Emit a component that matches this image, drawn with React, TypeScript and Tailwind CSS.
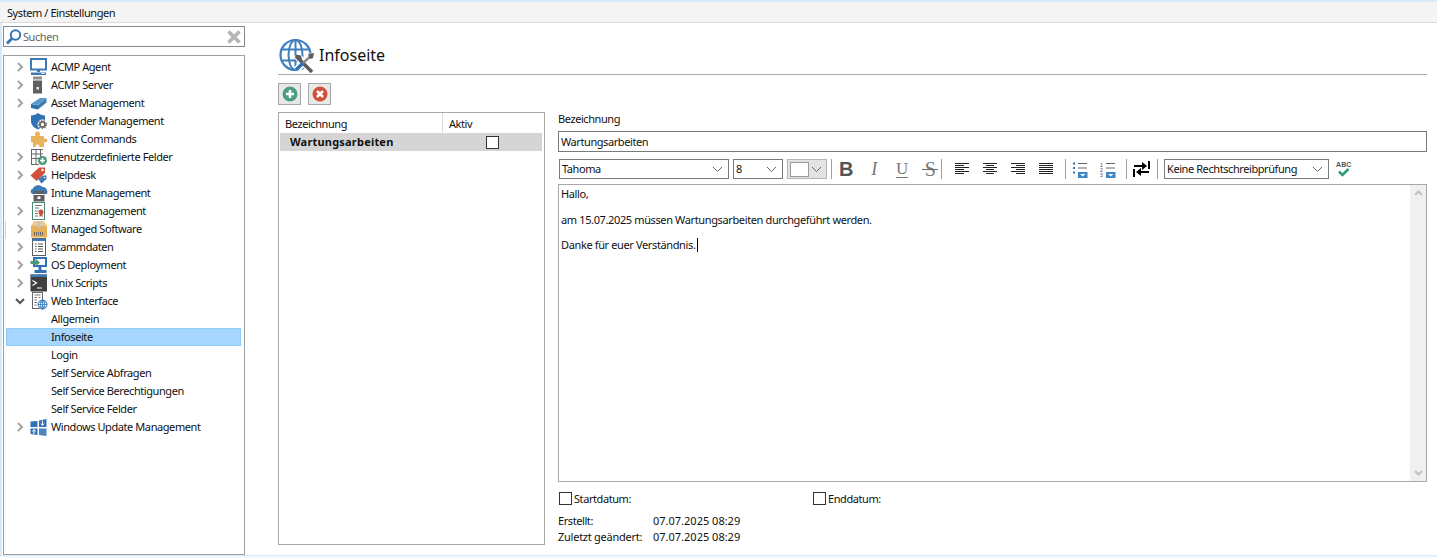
import React from "react";

const Chevron = ({ open }: { open?: boolean }) => (
  <svg width="10" height="10" viewBox="0 0 10 10" fill="none" stroke={open ? "#555" : "#a4a4a4"} strokeWidth="2">
    {open ? <path d="M1 3l4 4 4-4" /> : <path d="M3 1l4 4-4 4" />}
  </svg>
);

const Small = ({ children }: { children: React.ReactNode }) => (
  <svg width="18" height="18" viewBox="0 0 18 18" fill="none">{children}</svg>
);

const Monitor = () => (
  <Small>
    <rect x="1" y="1" width="15" height="10.500" fill="#fff" stroke="#3d7ab5" strokeWidth="2" />
    <rect x="7" y="12" width="3" height="2" fill="#3d7ab5" />
    <rect x="1" y="14.500" width="15" height="2.500" fill="#3d7ab5" />
    <rect x="11.500" y="15" width="3" height="1" fill="#fff" />
  </Small>
);
const Server = () => (
  <Small>
    <rect x="3" y="0.500" width="9" height="3" fill="#8f8f8f" />
    <rect x="3" y="4.500" width="9" height="13" fill="#5f5f5f" />
    <rect x="6.500" y="11" width="2.500" height="2.500" fill="#e8e8e8" />
  </Small>
);
const Asset = () => (
  <Small>
    <path d="M1 10l9-6h6.500L8 11z" fill="#5b96cc" />
    <path d="M1 10l7 1.200v4.300L1 14z" fill="#2f6ea8" />
    <path d="M8 11l8.500-7v4.500L8 15.500z" fill="#3d7ab5" />
  </Small>
);
const Shield = () => (
  <Small>
    <path d="M1 3.500C4 3.500 6 2.500 8 1c2 1.500 4 2.500 7 2.500V9c0 4-3 7-7 8.500C4 16 1 13 1 9z" fill="#2f72b5" />
    <circle cx="12.500" cy="12.500" r="5" fill="#fff" />
    <circle cx="12.500" cy="12.500" r="2.600" fill="none" stroke="#666" strokeWidth="1.800" />
    <circle cx="12.500" cy="12.500" r="4" fill="none" stroke="#666" strokeWidth="1.200" strokeDasharray="1.300 1.500" />
  </Small>
);
const Puzzle = () => (
  <Small>
    <path d="M1 6h4.500C4.500 4 5 1.500 7.500 1.500S10.500 4 9.500 6H14v3c1.500-1 3.500 0 3.500 1.500S15.500 13 14 12v5H9c1-1.500 0-2.500-1.500-2.500S5 15.500 6 17H3v-5c-1 1-2 .5-2-1z" fill="#e8b45a" />
  </Small>
);
const Fields = () => (
  <Small>
    <path d="M1.500 1v16M6 1v16M10.500 1v9M1 1.500h12M1 6h12M1 10.500h9M1 16.500h8" stroke="#666" strokeWidth="1" />
    <circle cx="12.500" cy="12.500" r="4.500" fill="#4a9a7a" />
    <path d="M12.500 10v5M10 12.500h5" stroke="#fff" strokeWidth="1.500" />
  </Small>
);
const Tag = () => (
  <Small>
    <path d="M0.500 9.500L9 1.500h6v5.500l-8.500 8z" fill="#d0503a" />
    <circle cx="12.500" cy="4" r="1.200" fill="#fff" />
    <path d="M8 13l5-3.500h3.500V13l-5 4.500z" fill="#3d7ab5" />
    <circle cx="14.500" cy="11.500" r="0.800" fill="#fff" />
  </Small>
);
const Intune = () => (
  <Small>
    <path d="M3 10C0 10 0 5 3 4.500C4 1 10 0 12.500 3C15.500 2.500 18.500 6 17 10z" fill="#3d7ab5" />
    <rect x="3.500" y="7" width="11" height="10.500" fill="#5f5f5f" />
    <rect x="3.500" y="10" width="11" height="1" fill="#fff" />
    <rect x="7.500" y="12.500" width="3" height="2.500" fill="#fff" />
  </Small>
);
const License = () => (
  <Small>
    <rect x="2.500" y="0.500" width="12" height="17" fill="#fff" stroke="#4a8a70" />
    <path d="M5 3.500h7M5 6h4M5 9h3M5 11.500h3M5 14h3" stroke="#777" />
    <circle cx="11" cy="10" r="2.500" fill="#c9503c" />
    <path d="M9.500 11.500v3.500l1.500-1 1.500 1v-3.500" fill="#c9503c" />
  </Small>
);
const Box = () => (
  <Small>
    <path d="M1 6l3-5h10l3 5z" fill="#ecc98c" />
    <rect x="1" y="6" width="16" height="11.500" fill="#e6ae55" />
    <rect x="7.500" y="1" width="3" height="7" fill="#c4c4c4" />
    <path d="M4.500 12v3.500M6.500 12v3.500M8.500 12v3.500M10.500 12v3.500M12.500 12v3.500" stroke="#666" strokeWidth="1" />
  </Small>
);
const ListDoc = () => (
  <Small>
    <rect x="2.500" y="0.500" width="13" height="17" fill="#fff" stroke="#5f5f5f" />
    <rect x="2.500" y="0.500" width="13" height="2.500" fill="#3d7ab5" />
    <path d="M5 6h1.500M8 6h5M5 8.500h1.500M8 8.500h5M5 11h1.500M8 11h5M5 13.500h1.500M8 13.500h5" stroke="#555" />
  </Small>
);
const Deploy = () => (
  <Small>
    <rect x="3" y="1" width="14" height="10" fill="#2f72b5" />
    <rect x="5" y="3" width="10" height="6" fill="#fff" />
    <rect x="8.500" y="11" width="3" height="3" fill="#2f72b5" />
    <rect x="4.500" y="14" width="12" height="3" fill="#2f72b5" />
    <path d="M0.500 5h5V2.500L10 6.500l-4.500 4V8h-5z" fill="#4a9a7a" />
  </Small>
);
const Terminal = () => (
  <Small>
    <rect x="0.500" y="0.500" width="16.500" height="17" fill="#3f3f3f" />
    <rect x="0.500" y="0.500" width="16.500" height="2.500" fill="#3d7ab5" />
    <path d="M2.500 6.500l4 2.500-4 2.500" stroke="#fff" strokeWidth="1.200" fill="none" />
    <path d="M7 14h5" stroke="#fff" />
  </Small>
);
const WebDoc = () => (
  <Small>
    <rect x="2.500" y="0.500" width="10" height="16" fill="#fff" stroke="#666" />
    <path d="M4.500 3h6M4.500 5.500h2.500M8.500 5.500h2M4.500 8h2.500M4.500 10.500h2.500M4.500 13h2" stroke="#777" />
    <circle cx="12.500" cy="12.500" r="5" fill="#fff" />
    <circle cx="12.500" cy="12.500" r="4.500" fill="none" stroke="#2f72b5" />
    <path d="M8 12.500h9M12.500 8v9M9 10h7M9 15h7" stroke="#2f72b5" strokeWidth="0.800" />
    <ellipse cx="12.500" cy="12.500" rx="2" ry="4.500" fill="none" stroke="#2f72b5" strokeWidth="0.800" />
  </Small>
);
const WinUpdate = () => (
  <Small>
    <path d="M0.500 3.500L7.500 3v6h-7z" fill="#2f72b5" />
    <path d="M9 2.500l7.500-1.500v8H9z" fill="#2f72b5" />
    <path d="M0.500 10.500h7v6.500l-7-1z" fill="#2f72b5" />
    <path d="M9 10.500h7.500V18L9 17z" fill="#4a86c0" />
    <path d="M12.500 2.500v5M11 5.500l1.500 2 1.500-2" stroke="#fff" strokeWidth="1" fill="none" />
    <path d="M4 11.500v4.500M2.500 13.500l1.500-2 1.500 2" stroke="#fff" strokeWidth="1" fill="none" />
  </Small>
);

type Row = { label: string; icon?: React.ReactNode; chevron?: "open" | "closed"; selected?: boolean; mark?: boolean };
const rows: Row[] = [
  { label: "ACMP Agent", icon: <Monitor />, chevron: "closed" },
  { label: "ACMP Server", icon: <Server />, chevron: "closed" },
  { label: "Asset Management", icon: <Asset />, chevron: "closed" },
  { label: "Defender Management", icon: <Shield /> },
  { label: "Client Commands", icon: <Puzzle /> },
  { label: "Benutzerdefinierte Felder", icon: <Fields />, chevron: "closed" },
  { label: "Helpdesk", icon: <Tag />, chevron: "closed" },
  { label: "Intune Management", icon: <Intune /> },
  { label: "Lizenzmanagement", icon: <License />, chevron: "closed" },
  { label: "Managed Software", icon: <Box />, chevron: "closed", mark: true },
  { label: "Stammdaten", icon: <ListDoc />, chevron: "closed" },
  { label: "OS Deployment", icon: <Deploy />, chevron: "closed" },
  { label: "Unix Scripts", icon: <Terminal />, chevron: "closed" },
  { label: "Web Interface", icon: <WebDoc />, chevron: "open" },
  { label: "Allgemein" },
  { label: "Infoseite", selected: true },
  { label: "Login" },
  { label: "Self Service Abfragen" },
  { label: "Self Service Berechtigungen" },
  { label: "Self Service Felder" },
  { label: "Windows Update Management", icon: <WinUpdate />, chevron: "closed" },
];

const TreeRow = ({ row }: { row: Row }) => (
  <div className={`relative flex h-[18px] items-center border ${row.selected ? "border-[#8fcbfb] bg-[#a6d5fe]" : "border-transparent"}`}>
    {row.mark && <span className="absolute -left-[2px] top-0 h-[18px] w-px bg-[#bcd9f2]" />}
    <span className="flex w-[23px] justify-end pr-[5px]">{row.chevron && <Chevron open={row.chevron === "open"} />}</span>
    <span className="flex w-[21px] items-center">{row.icon}</span>
    <span className="whitespace-nowrap">{row.label}</span>
  </div>
);

const Caret = () => (
  <svg width="11" height="7" viewBox="0 0 11 7" fill="none" stroke="#666" strokeWidth="1">
    <path d="M1 1l4.500 4.500L10 1" />
  </svg>
);

const Select = ({ label, className }: { label: string; className: string }) => (
  <div className={`flex h-[20px] items-center justify-between border border-[#7a7a7a] bg-white pl-[2px] pr-[5px] ${className}`}>
    <span className="whitespace-nowrap">{label}</span>
    <Caret />
  </div>
);

const Sep = ({ className }: { className: string }) => <span className={`h-[20px] w-px bg-[#a0a0a0] ${className}`} />;

const Slot = ({ children, className = "" }: { children: React.ReactNode; className?: string }) => (
  <span className={`relative flex h-[20px] w-[28px] items-center justify-center ${className}`}>{children}</span>
);

const Align = ({ d }: { d: string }) => (
  <svg width="14" height="12" viewBox="0 0 14 12" stroke="#222" strokeWidth="1" fill="none"><path d={d} /></svg>
);

const ListIcon = ({ numbered }: { numbered?: boolean }) => (
  <svg width="16" height="17" viewBox="0 0 16 17" fill="none">
    {numbered ? (
      <text x="0" y="6" fontSize="5" fill="#444" fontFamily="Liberation Sans, sans-serif">1</text>
    ) : (
      <rect x="1" y="1.500" width="2" height="2" fill="#2f72b5" />
    )}
    {numbered ? (
      <text x="0" y="11" fontSize="5" fill="#444" fontFamily="Liberation Sans, sans-serif">2</text>
    ) : (
      <rect x="1" y="6" width="2" height="2" fill="#2f72b5" />
    )}
    {numbered ? (
      <text x="0" y="16" fontSize="5" fill="#444" fontFamily="Liberation Sans, sans-serif">3</text>
    ) : (
      <rect x="1" y="10.500" width="2" height="2" fill="#2f72b5" />
    )}
    <path d="M6 2.500h9M6 7h9" stroke="#666" />
    <rect x="6" y="11" width="9.500" height="6" fill="#3d86c6" />
    <path d="M8 13h5.500l-2.750 2.500z" fill="#fff" />
  </svg>
);

const Check = ({ className = "" }: { className?: string }) => (
  <span className={`block h-[13px] w-[13px] shrink-0 border border-[#333] bg-white ${className}`} />
);

export default function App() {
  return (
    <div
      className="flex h-[558px] w-[1437px] flex-col overflow-hidden bg-white text-[11px] leading-[14px] tracking-[-0.42px] text-[#111]"
      style={{ fontFamily: '"Noto Sans", sans-serif' }}
    >
      <div className="h-[2px] shrink-0 bg-[#d6eafa]" />
      <div className="flex h-[21px] shrink-0 items-center border-b border-[#dcdcdc] bg-[#f4f4f4] pl-[7px] pt-[1px]">System / Einstellungen</div>
      <div className="flex min-h-0 flex-1">
        <div className="w-[2px] bg-[#d6eafa]" />
        <div className="flex w-[243px] shrink-0 flex-col pl-px pt-[3px]">
          <div className="flex h-[21px] shrink-0 items-center border border-[#7f8a94] bg-white pl-px pr-[3px]">
            <svg width="18" height="18" viewBox="0 0 18 18" fill="none" className="shrink-0">
              <circle cx="10.500" cy="7" r="4.700" stroke="#3477b7" strokeWidth="2" />
              <path d="M7 10.500L2 15.500" stroke="#3477b7" strokeWidth="3" />
            </svg>
            <span className="flex-1 text-[#666]">Suchen</span>
            <svg width="14" height="14" viewBox="0 0 14 14" stroke="#b5b5b5" strokeWidth="3.500">
              <path d="M1.500 1.500l11 11M12.500 1.500l-11 11" />
            </svg>
          </div>
          <div className="mt-[8px] flex-1 border border-[#a0a0a0] bg-white pl-[2px] pr-[3px] pt-[2px]">
            {rows.map((r) => (
              <TreeRow key={r.label} row={r} />
            ))}
          </div>
        </div>
        <div className="flex min-w-0 flex-1 flex-col pl-[33px] pr-[10px] pt-[15px]">
          <div className="flex h-[37px] shrink-0 items-start border-b border-[#a8a8a8]">
            <svg width="38" height="36" viewBox="0 0 38 36" fill="none" className="ml-[1px] shrink-0">
              <circle cx="16.500" cy="17" r="15" stroke="#3f7fbd" strokeWidth="2.200" />
              <ellipse cx="16.500" cy="17" rx="7" ry="15" stroke="#3f7fbd" strokeWidth="2" />
              <path d="M2 11.500h29M2 22.500h29M16.500 2v30" stroke="#3f7fbd" strokeWidth="2" />
              <path d="M17 17l16 16M17 32l17-15" stroke="#fff" strokeWidth="7" />
              <path d="M19 20l14 14" stroke="#5c5c5c" strokeWidth="3.500" />
              <path d="M17 16.500l5 1 1 4-4 1-3-3z" fill="#5c5c5c" />
              <path d="M24 25l9-8" stroke="#8a8a8a" strokeWidth="2.500" />
              <path d="M17 32l7-7" stroke="#2f72b5" strokeWidth="3.500" />
              <path d="M29 16l6-1-1 5-3 1z" fill="#5c5c5c" />
            </svg>
            <span className="ml-[2px] pt-[7px] text-[16px] leading-[20px] tracking-normal">Infoseite</span>
          </div>
          <div className="mt-[8px] flex h-[22px] shrink-0 gap-[7px]">
            <div className="flex h-[22px] w-[23px] items-center justify-center border border-[#a8a8a8] bg-[#e8e8e8]">
              <svg width="16" height="16" viewBox="0 0 16 16">
                <circle cx="8" cy="8" r="7.500" fill="#4a9e7e" />
                <path d="M8 4v8M4 8h8" stroke="#fff" strokeWidth="2.500" />
              </svg>
            </div>
            <div className="flex h-[22px] w-[23px] items-center justify-center border border-[#a8a8a8] bg-[#e8e8e8]">
              <svg width="16" height="16" viewBox="0 0 16 16">
                <circle cx="8" cy="8" r="7.500" fill="#d0503a" />
                <path d="M5 5l6 6M11 5l-6 6" stroke="#fff" strokeWidth="2.500" />
              </svg>
            </div>
          </div>
          <div className="mt-[7px] flex min-h-0 flex-1 pb-[10px]">
            <div className="w-[267px] shrink-0 border border-[#a8a8a8] pl-px pr-[2px]">
              <div className="flex h-[20px] items-center">
                <span className="h-[20px] w-[163px] border-r border-[#dcdcdc] pl-[5px] pt-[4px]">Bezeichnung</span>
                <span className="pl-[6px] pt-[1px]">Aktiv</span>
              </div>
              <div className="flex h-[18px] items-center bg-[#d5d5d5]">
                <span className="w-[206px] pl-[10px] font-bold tracking-[0.2px]">Wartungsarbeiten</span>
                <Check />
              </div>
            </div>
            <div className="ml-[13px] flex min-w-0 flex-1 flex-col">
              <div className="h-[19px] shrink-0">Bezeichnung</div>
              <div className="flex h-[21px] shrink-0 items-center border border-[#7a7a7a] bg-white pl-[2px]">Wartungsarbeiten</div>
              <div className="mt-[7px] flex h-[20px] shrink-0 items-center">
                <Select label="Tahoma" className="ml-px w-[170px]" />
                <Select label="8" className="ml-[4px] w-[50px]" />
                <div className="ml-[4px] flex h-[20px] w-[40px] items-center justify-between border border-[#b5b5b5] bg-[#e3e3e3] pl-[2px] pr-[4px]">
                  <span className="h-[15px] w-[19px] border border-[#9a9a9a] bg-white" />
                  <Caret />
                </div>
                <Sep className="ml-[4px]" />
                <Slot>
                  <span className="text-[20px] font-bold leading-none text-[#555]" style={{ fontFamily: '"Liberation Sans", sans-serif' }}>B</span>
                </Slot>
                <Slot>
                  <span className="text-[18px] italic leading-none text-[#777]" style={{ fontFamily: '"Liberation Serif", serif' }}>I</span>
                </Slot>
                <Slot>
                  <span className="border-b border-[#777] text-[17px] leading-[17px] text-[#777]" style={{ fontFamily: '"Liberation Serif", serif' }}>U</span>
                </Slot>
                <Slot className="-mr-[3px]">
                  <span className="text-[20px] leading-none text-[#777]" style={{ fontFamily: '"Liberation Serif", serif' }}>S</span>
                  <span className="absolute left-[6px] top-[10px] h-px w-[16px] bg-[#666]" />
                </Slot>
                <Sep className="" />
                <Slot className="ml-[6px]"><Align d="M0 .5h14M0 2.500h9M0 4.500h14M0 6.500h9M0 8.500h14M0 10.500h9" /></Slot>
                <Slot><Align d="M0 .5h14M3 2.500h8M0 4.500h14M3 6.500h8M0 8.500h14M3 10.500h8" /></Slot>
                <Slot><Align d="M0 .5h14M5 2.500h9M0 4.500h14M5 6.500h9M0 8.500h14M5 10.500h9" /></Slot>
                <Slot><Align d="M0 .5h14M0 2.500h14M0 4.500h14M0 6.500h14M0 8.500h14M0 10.500h14" /></Slot>
                <Sep className="ml-[5px]" />
                <Slot><ListIcon /></Slot>
                <Slot><ListIcon numbered /></Slot>
                <Sep className="ml-[4px]" />
                <Slot>
                  <svg width="17" height="16" viewBox="0 0 17 16" fill="#000">
                    <rect x="1" y="4" width="12" height="2" />
                    <path d="M9 1l5 4-5 4z" />
                    <rect x="15" y="0" width="2" height="8" />
                    <rect x="4" y="10" width="12" height="2" />
                    <path d="M8 7l-5 4 5 4z" />
                    <rect x="0" y="8" width="2" height="8" />
                  </svg>
                </Slot>
                <Sep className="ml-[2px]" />
                <Select label="Keine Rechtschreibprüfung" className="ml-[6px] w-[165px]" />
                <Slot className="ml-px">
                  <svg width="18" height="18" viewBox="0 0 18 18">
                    <text x="1" y="7" fontSize="7" fontWeight="700" fill="#555" textLength="15" fontFamily="Liberation Sans, sans-serif">ABC</text>
                    <path d="M4 11.500l3.500 3.500 6-6" fill="none" stroke="#2f9a6a" strokeWidth="2.500" />
                  </svg>
                </Slot>
              </div>
              <div className="mt-[5px] flex h-[298px] shrink-0 border border-[#a8a8a8] bg-white">
                <div className="flex-1 pl-[2px] pt-[2px] tracking-[-0.37px]">
                  <div className="h-[26px] leading-[14px]">Hallo,</div>
                  <div className="h-[25px] leading-[14px]">am 15.07.2025 müssen Wartungsarbeiten durchgeführt werden.</div>
                  <div className="flex items-start leading-[14px]">
                    Danke für euer Verständnis.
                    <span className="ml-px h-[14px] w-px bg-black" />
                  </div>
                </div>
                <div className="flex w-[16px] flex-col items-center justify-between bg-[#f0f0f0] py-[5px]">
                  <svg width="9" height="6" viewBox="0 0 9 6" fill="none" stroke="#c0c0c0" strokeWidth="2"><path d="M1 5l3.500-3.500L8 5" /></svg>
                  <svg width="9" height="6" viewBox="0 0 9 6" fill="none" stroke="#c0c0c0" strokeWidth="2"><path d="M1 1l3.500 3.500L8 1" /></svg>
                </div>
              </div>
              <div className="mt-[9px] flex h-[15px] shrink-0 items-center pl-px">
                <div className="flex w-[254px] items-center gap-[2px]"><Check />Startdatum:</div>
                <div className="flex items-center gap-[2px]"><Check />Enddatum:</div>
              </div>
              <div className="mt-[7px] grid grid-cols-[95px_1fr] leading-[16px]">
                <span>Erstellt:</span>
                <span className="tracking-normal">07.07.2025 08:29</span>
                <span className="tracking-[-0.25px]">Zuletzt geändert:</span>
                <span className="tracking-normal">07.07.2025 08:29</span>
              </div>
            </div>
          </div>
        </div>
      </div>
      <div className="h-[3px] shrink-0 border-t border-[#d6eafa] bg-[#f6f6f6]" />
    </div>
  );
}
